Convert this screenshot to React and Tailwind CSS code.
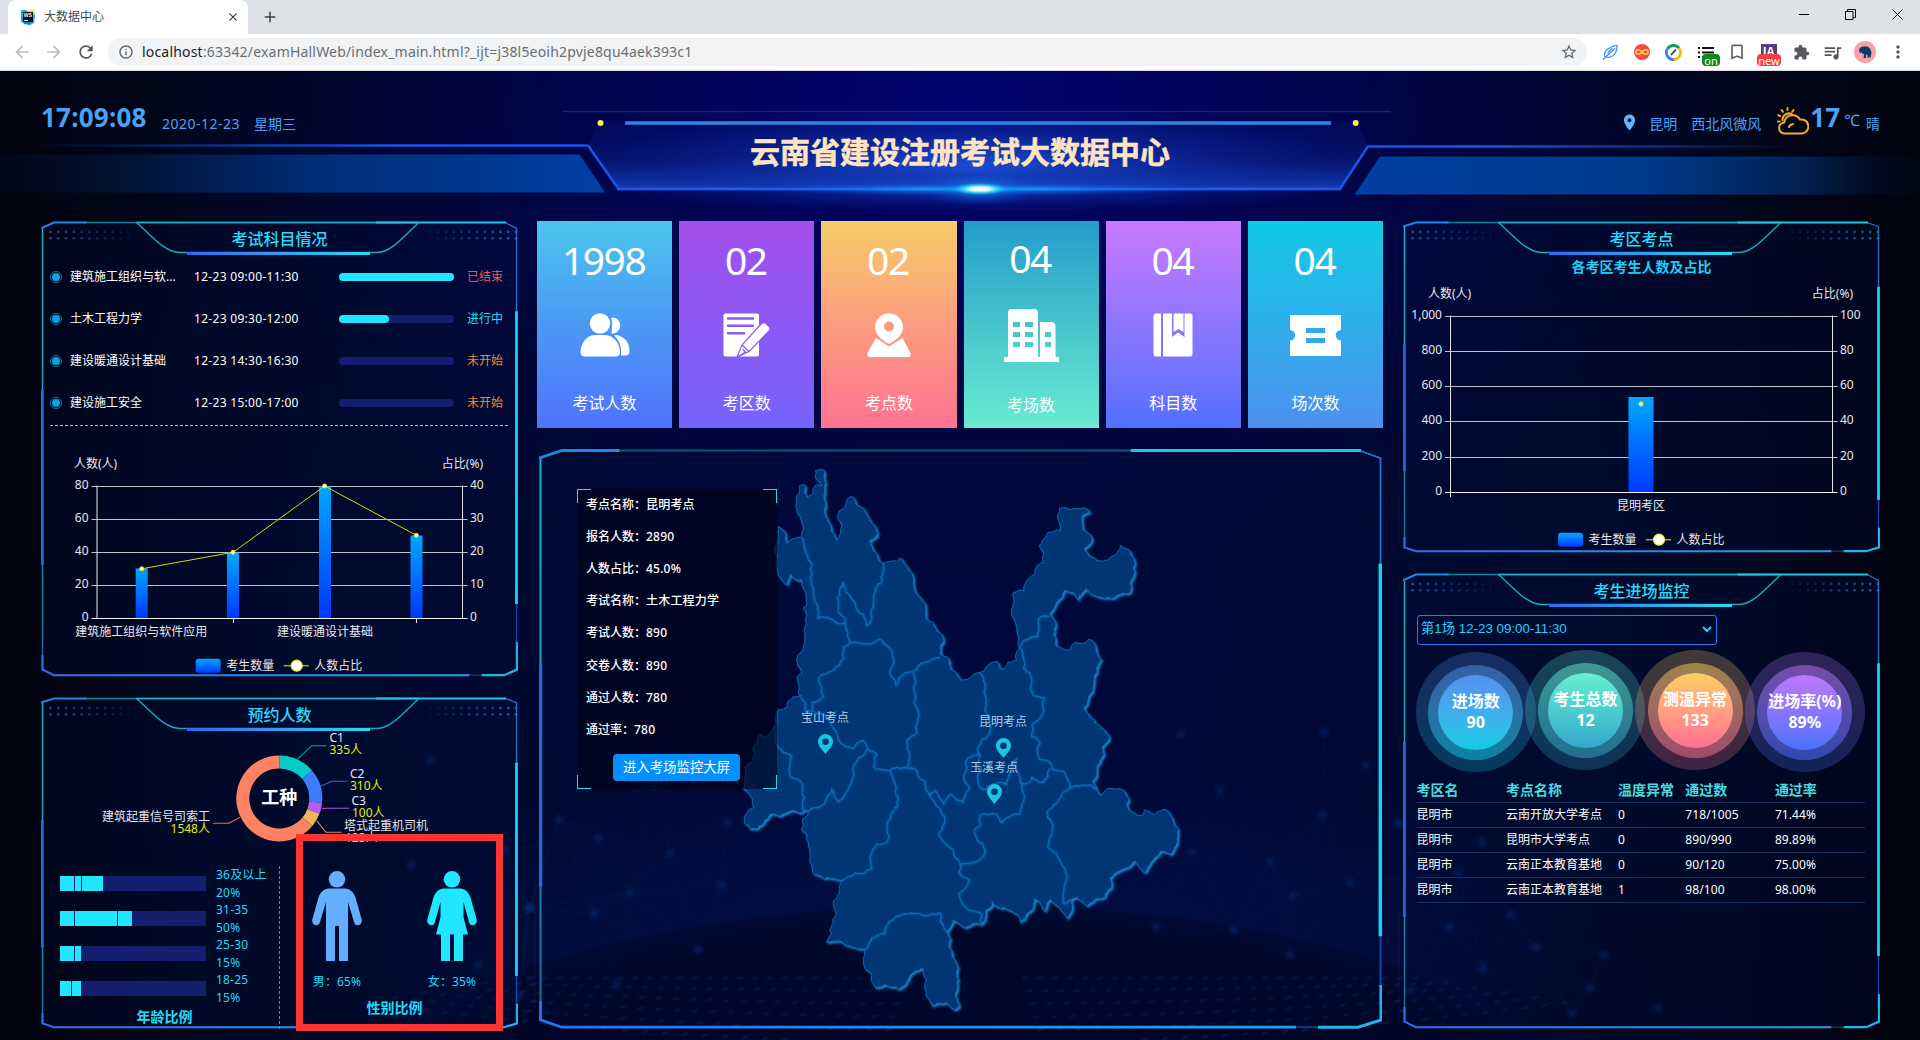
import React from "react";
import {
  MdArrowBack, MdArrowForward, MdRefresh, MdInfoOutline, MdStarBorder, MdExtension,
  MdQueueMusic, MdMoreVert, MdBookmarkBorder, MdLocationOn, MdClose, MdAdd,
} from "react-icons/md";

/* ---------- geometry helpers ---------- */

const hash = (a, b, c) => {
  const s = Math.sin(a * 12.9898 + b * 78.233 + c * 37.719) * 43758.5453;
  return s - Math.floor(s) - 0.5;
};

// Splits a segment by midpoint displacement; the result does not depend on its direction.
const rough = (p, q, out) => {
  const dx = q[0] - p[0];
  const dy = q[1] - p[1];
  const len = Math.hypot(dx, dy);
  if (len < 3.2) {
    out.push(q);
    return;
  }
  const sign = p[0] + p[1] * 0.37 < q[0] + q[1] * 0.37 ? 1 : -1;
  const k = hash(p[0] + q[0], p[1] + q[1], 1) * 0.42 * sign;
  const m = [(p[0] + q[0]) / 2 - dy * k * 0.8, (p[1] + q[1]) / 2 + dx * k * 0.8];
  rough(p, m, out);
  rough(m, q, out);
};

const toPage = ([x, y]) => [530 + x / 3, 440 + y / 2.613];

const coast = (pts, closed) => {
  const page = pts.map(toPage);
  const out = [page[0]];
  for (let i = 1; i < page.length; i++) rough(page[i - 1], page[i], out);
  if (closed) rough(page[page.length - 1], page[0], out);
  return "M" + out.map((p) => p[0].toFixed(1) + " " + p[1].toFixed(1)).join("L") + (closed ? "Z" : "");
};

const east = (pts) => pts.map(([x, y]) => [x + 1110, y]);

const OUTLINE = [
  [857,80],[880,78],[884,120],[884,160],[890,205],[905,240],[921,262],[922,200],[940,178],[950,160],[965,147],[985,172],[1008,192],[1025,218],[1043,245],[1018,262],[1030,290],[1058,322],[1075,318],[1100,318],[1110,308],[1130,330],[1150,370],[1170,410],[1187,432],[1187,462],[1205,475],[1235,508],[1238,530],[1230,560],[1255,570],[1262,600],[1282,612],[1293,627],[1320,622],
  ...east([[238,608],[262,590],[290,578],[303,600],[325,580],[350,575],[358,540],[350,500],[335,460],[340,398],[372,395],[395,355],[430,320],[432,295],[418,275],[440,245],[480,238],[473,195],[478,178],[510,182],[565,182],[568,190],[543,200],[548,235],[572,250],[572,270],[552,285],[570,305],[590,317],[635,305],[660,275],[690,290],[702,310],[700,360],[690,398],[668,400],[640,413],[590,408],[558,388],[535,418],[495,392],[470,425],[450,455],[468,480],[470,540],[490,548],[510,548],[522,530],[555,530],[567,520],[585,535],[605,575],[582,620],[570,665],[552,700],[560,712],[595,745],[628,775],[608,800],[612,820],[592,850],[578,890],[590,915],[605,928],[620,912],[660,912],[685,935],[685,965],[725,982],[735,966],[760,980],[800,968],[815,985],[835,1018],[828,1060],[810,1083],[780,1075],[750,1110],[735,1130],[705,1100],[680,1118],[630,1145],[635,1170],[615,1195],[585,1200],[562,1217],[530,1195],[515,1200],[503,1250],[470,1215],[450,1200],[435,1232],[405,1198],[385,1235],[362,1262],[335,1230],[275,1205],[245,1265],[190,1272],[158,1255],[140,1285],[150,1330],[170,1370],[175,1410],[165,1450],[178,1478],[165,1488],[140,1470],[95,1480],[78,1450],[80,1410],[68,1380],[30,1400]]),
  [1105,1435],[1060,1425],[1035,1430],[1025,1400],[1005,1380],[1008,1330],[985,1330],[950,1320],[888,1312],[905,1270],[920,1240],[910,1210],[930,1175],[940,1150],[920,1148],[880,1145],[848,1130],[840,1075],[835,1050],[815,1020],[818,990],[838,968],[780,970],[720,978],[660,1018],[642,1000],[672,960],[665,935],[640,912],[645,855],[668,840],[668,805],[688,768],[705,778],[735,750],[740,708],[770,700],[790,670],[812,668],[800,620],[815,610],[825,520],[820,440],[815,365],[780,352],[770,378],[755,365],[740,320],[732,285],[745,250],[745,225],[765,240],[770,270],[790,258],[815,255],[820,235],[802,190],[808,120],[825,118],[832,150],[850,140],[855,120],[875,120],[855,95],
];

const BORDERS = [
  [[815,255],[830,300],[845,350],[850,400],[862,465],[905,468],[920,478],[945,480]],
  [[1058,322],[1055,370],[1030,410],[1020,480],[1008,485],[1000,455],[970,420],[940,370],[922,410],[925,450],[945,480],[960,530]],
  [[960,530],[990,530],[1045,520],[1080,545],[1080,600],[1098,640],[1125,608],[1150,605],[1185,580],[1230,570]],
  [[1150,605],[1155,660],[1165,710],[1160,765],[1130,790],[1130,855]],
  [[960,530],[940,540],[942,570],[910,600],[865,620],[880,670],[845,685],[845,708]],
  [[812,668],[825,708],[845,708],[880,715],[905,745],[930,790],[970,805],[1000,785],[1015,810],[1040,820],[1035,860],[1080,862],[1120,855],[1155,860]],
  [[1010,808],[985,830],[960,900],[925,945],[905,910],[890,935],[838,968]],
  [[740,708],[745,800],[785,825],[780,880],[818,900],[820,968]],
  [[1080,862],[1095,900],[1090,970],[1070,1010],[1072,1050],[1040,1055],[1025,1120],[975,1130],[940,1150]],
  [[1155,860],[1200,930],[1240,1005],[1225,1030],[1270,1070],[1290,1110],[1285,1130],[1320,1150],[1310,1165],[1285,1185],[1295,1210],[1320,1230],[1355,1240],[1355,1265]],
  [[1200,930],[1215,915],[1240,950],[1260,925],[1300,948],[1318,910],[1300,880],[1310,835],[1350,822],[1342,803],[1375,770],[1378,730],[1368,690],[1360,620],[1348,608]],
  east([[358,540],[370,595],[390,610],[397,665],[432,672],[430,710],[395,745],[395,775],[420,790],[420,835],[448,840],[455,858],[490,865],[512,908],[590,912]]),
  east([[358,540],[390,515],[410,515],[415,468],[450,460]]),
  east([[448,858],[430,895],[395,880],[385,895],[360,895],[352,830],[335,850],[320,900],[280,898],[250,915],[235,895],[245,860],[240,822]]),
  east([[365,895],[372,940],[360,978],[305,1000],[290,978],[240,980],[240,1008],[225,1015],[230,1045],[255,1075],[240,1095],[215,1105],[180,1110]]),
  east([[512,908],[490,920],[440,970],[455,1000],[445,1065],[470,1080],[490,1115],[492,1170],[488,1210],[515,1200]]),
  [[1008,1330],[1025,1300],[1065,1290],[1075,1260],[1130,1238],[1180,1243],[1230,1235],[1245,1280],[1250,1285]],
];

/* ---------- browser chrome ---------- */

function TabStrip() {
  return (
    <div className="flex h-[34px] w-full items-start justify-between bg-[#dee1e6]">
      <div className="flex items-center">
        <div className="ml-2 flex h-[34px] w-60 items-center rounded-t-lg bg-white pl-3 pr-2">
          <svg width="16" height="16" viewBox="0 0 16 16">
            <path d="M1 1l5 0 3 2 5-2 1 6-1 7-4 2-5-2-4-1z" fill="#12b5e8" />
            <path d="M8 1l6 0 1 4-4 1z" fill="#e8e84a" />
            <path d="M1 8l3 7 6 1 1-3z" fill="#1380e0" />
            <rect x="3" y="3" width="10" height="10" fill="#111" />
            <text x="3.8" y="8" fontSize="5" fontWeight="700" fill="#fff" fontFamily="Liberation Sans, sans-serif">WS</text>
            <rect x="4" y="11" width="4" height="1" fill="#fff" />
          </svg>
          <span className="ml-2 flex-1 text-xs text-[#45494d]">大数据中心</span>
          <MdClose className="size-[14px] text-[#3c4043]" />
        </div>
        <MdAdd className="ml-[13px] size-[18px] text-[#3c4043]" />
      </div>
      <div className="flex h-[28px] items-center gap-9 pr-[17px]">
        <span className="h-px w-2.5 bg-black" />
        <svg width="11" height="11" viewBox="0 0 11 11" fill="none" stroke="#000"><path d="M.5 2.5h7.5v8H.5zM2.5 2.5v-2h8v8H8" /></svg>
        <svg width="11" height="11" viewBox="0 0 11 11" fill="none" stroke="#000"><path d="M.5.5l10 10M10.500.5l-10 10" /></svg>
      </div>
    </div>
  );
}

function Toolbar() {
  return (
    <div className="flex h-[37px] w-full items-center border-b border-[#d5dadf] bg-white">
      <div className="ml-3 flex w-24 items-center gap-3">
        <MdArrowBack className="size-5 text-[#babcbe]" />
        <MdArrowForward className="size-5 text-[#babcbe]" />
        <MdRefresh className="size-5 text-[#54575b]" />
      </div>
      <div className="flex h-7 w-[1479px] items-center rounded-full bg-[#f1f3f4] pl-2.5 pr-[9px]">
        <MdInfoOutline className="size-4 text-[#5f6368]" />
        <span className="ml-2 flex-1 text-sm tracking-[0.19px] text-[#6a6e72]">
          <span className="text-[#202124]">localhost</span>:63342/examHallWeb/index_main.html?_ijt=j38l5eoih2pvje8qu4aek393c1
        </span>
        <MdStarBorder className="size-[18px] text-[#5f6368]" />
      </div>
      <div className="flex items-center">
        <div className="flex w-8 justify-end">
          <svg width="17" height="18" viewBox="0 0 18 18" fill="none" stroke="#3f8fe8" strokeWidth="1.3"><path d="M1 17L14 5M3 14C1 8 8 3 16 2c0 8-5 14-11 12.500M6 10l5-5" /></svg>
        </div>
        <div className="ml-[15px] flex size-4 items-center justify-center rounded-full bg-[#f5484a]">
          <svg width="14" height="8" viewBox="0 0 14 8" fill="none" stroke="#ffd83a" strokeWidth="1.500"><path d="M7 4C5 1 1 1 1 4s4 3 6 0 6-3 6 0-4 3-6 0z" /></svg>
        </div>
        <svg className="ml-[15px]" width="17" height="17" viewBox="0 0 17 17" fill="none" strokeWidth="2.8">
          <path d="M2.700 4.500A7 7 0 0 1 14 4.200" stroke="#159a5b" />
          <path d="M14 4.200A7 7 0 0 1 9 15.500" stroke="#f7b90f" />
          <path d="M9 15.500A7 7 0 0 1 2.700 4.500" stroke="#3b7ded" />
          <path d="M6 11l5-5.500" stroke="#333" strokeWidth="1.800" />
        </svg>
        <div className="relative ml-4 h-4 w-4">
          <svg width="16" height="16" viewBox="0 0 16 16" stroke="#111" strokeWidth="2"><path d="M0 4h2M4 4h12M0 8.500h2M4 8.500h12M0 13h2M4 13h12" /></svg>
          <span className="absolute left-1 top-[10px] flex h-3 w-[18px] items-center justify-center rounded-sm bg-[#11871f] text-[11px] leading-none text-white">on</span>
        </div>
        <MdBookmarkBorder className="ml-[13px] size-5 text-[#5f6368]" />
        <div className="relative ml-[14px] h-4 w-4 bg-[#533c80] text-center font-['Liberation_Sans',sans-serif] text-[12px] font-bold leading-4 text-white">
          IA
          <span className="absolute -left-1 top-[10px] flex h-3 w-6 items-center justify-center rounded-sm bg-[#f93e3e] font-['Noto_Sans',sans-serif] text-[11px] font-normal leading-none text-white">new</span>
        </div>
        <MdExtension className="ml-4 size-[17px] text-[#54575b]" />
        <MdQueueMusic className="ml-3 size-[21px] text-[#54575b]" />
        <div className="ml-[11px] flex size-[22px] items-center justify-center rounded-full bg-[#f9a1a6]">
          <svg width="14" height="14" viewBox="0 0 14 14"><path d="M1 6q0-4 4-4.500 5-1 7 2l1.500 4-1 5H9.500V10L8 9.500V13H5.500L6 9 4 8.500 3.500 7 2 8z" fill="#123a66" /></svg>
        </div>
        <MdMoreVert className="ml-3 size-5 text-[#54575b]" />
      </div>
    </div>
  );
}

/* ---------- page background ---------- */

const NODES = [
  [559,819],[598,838],[654,785],[670,853],[630,893],[722,885],[727,822],[594,914],[698,950],[617,985],[530,908],
  [1181,734],[1220,791],[1192,852],[1270,861],[1293,895],[1324,732],[1323,815],[1366,765],[1350,883],[1156,927],[1234,930],[1398,823],[1290,955],
  [1450,927],[1483,968],[1536,947],[1511,915],[1604,955],[1590,988],[1482,842],[1459,873],[1572,1014],[1659,1008],[1411,990],
  [411,865],[505,850],[478,965],[519,996],[430,760],[528,908],
];

function Backdrop() {
  const links = [];
  NODES.forEach((a, i) =>
    NODES.forEach((b, j) => {
      if (j > i && Math.hypot(a[0] - b[0], a[1] - b[1]) < 118) links.push([a, b]);
    })
  );
  const dashes = [];
  for (let r = 0; r < 6; r++) {
    for (let i = -30; i <= 30; i++) {
      const x = 965 + i * (15 + r);
      const y = 978 + r * 13 - i * i * 0.018 * r * 0.5;
      if (Math.abs(i) > 3 && y < 1040) dashes.push([x, y, i]);
    }
  }
  return (
    <svg className="absolute inset-0" width="1920" height="969" viewBox="0 71 1920 969">
      <defs>
        <radialGradient id="bgTop" gradientUnits="userSpaceOnUse" cx="960" cy="100" r="820" gradientTransform="translate(960 100) scale(1 .6) translate(-960 -100)">
          <stop offset="0" stopColor="#000270" /><stop offset=".4" stopColor="#00035a" stopOpacity=".85" /><stop offset="1" stopColor="#000540" stopOpacity="0" />
        </radialGradient>
        <radialGradient id="bgMid" gradientUnits="userSpaceOnUse" cx="960" cy="640" r="980">
          <stop offset="0" stopColor="#00063e" /><stop offset=".6" stopColor="#000a2c" /><stop offset="1" stopColor="#010619" />
        </radialGradient>
        <radialGradient id="bgHorizon" gradientUnits="userSpaceOnUse" cx="965" cy="940" r="640" gradientTransform="translate(965 940) scale(1 .28) translate(-965 -940)">
          <stop offset="0" stopColor="#031458" stopOpacity=".5" /><stop offset=".6" stopColor="#021250" stopOpacity=".45" /><stop offset="1" stopColor="#020c50" stopOpacity="0" />
        </radialGradient>
        <linearGradient id="bgSides" x1="0" y1="0" x2="1" y2="0">
          <stop offset="0" stopColor="#01030f" /><stop offset=".1" stopColor="#01030f" stopOpacity="0" /><stop offset=".9" stopColor="#01030f" stopOpacity="0" /><stop offset="1" stopColor="#01030f" />
        </linearGradient>
        <radialGradient id="bgHill" gradientUnits="userSpaceOnUse" cx="965" cy="1125" r="626" gradientTransform="translate(965 1125) scale(1 .35) translate(-965 -1125)">
          <stop offset="0" stopColor="#000526" /><stop offset=".9" stopColor="#000628" /><stop offset="1" stopColor="#000932" />
        </radialGradient>
      </defs>
      <rect x="0" y="71" width="1920" height="969" fill="url(#bgMid)" />
      <rect x="0" y="71" width="1920" height="969" fill="url(#bgTop)" />
      <rect x="300" y="740" width="1330" height="300" fill="url(#bgHorizon)" />
      <ellipse cx="965" cy="1125" rx="626" ry="220" fill="url(#bgHill)" />
      <g stroke="#0c2f80" strokeWidth="1" opacity=".18">
        {links.map(([a, b], i) => <line key={i} x1={a[0]} y1={a[1]} x2={b[0]} y2={b[1]} />)}
      </g>
      <g fill="#0a3480">
        {NODES.map(([x, y], i) => (
          <g key={i}><circle cx={x} cy={y} r="6" opacity=".2" /><circle cx={x} cy={y} r="3" opacity=".3" /></g>
        ))}
      </g>
      <g fill="#0b3a8c" opacity=".28">
        {dashes.map(([x, y, i], k) => <ellipse key={k} cx={x} cy={y} rx="4" ry="1.500" transform={`rotate(${i < 0 ? -14 : -16} ${x} ${y})`} />)}
      </g>
      <rect x="0" y="71" width="1920" height="969" fill="url(#bgSides)" />
    </svg>
  );
}

/* ---------- header ---------- */

function HeaderArt() {
  return (
    <svg className="absolute inset-0" width="1920" height="150" viewBox="0 71 1920 150">
      <defs>
        <linearGradient id="bandL"><stop offset="0" stopColor="#01122e" stopOpacity=".3" /><stop offset=".5" stopColor="#002c74" /><stop offset="1" stopColor="#0040a4" /></linearGradient>
        <linearGradient id="bandR"><stop offset="0" stopColor="#003fa0" /><stop offset=".5" stopColor="#003a8e" /><stop offset=".8" stopColor="#01204e" /><stop offset="1" stopColor="#010818" stopOpacity=".3" /></linearGradient>
        <linearGradient id="edgeL" gradientUnits="userSpaceOnUse" x1="30" y1="0" x2="400" y2="0"><stop offset="0" stopColor="#1656f0" stopOpacity="0" /><stop offset="1" stopColor="#1656f0" /></linearGradient>
        <linearGradient id="edgeR" gradientUnits="userSpaceOnUse" x1="1480" y1="0" x2="1800" y2="0"><stop offset="0" stopColor="#1656f0" /><stop offset="1" stopColor="#1656f0" stopOpacity="0" /></linearGradient>
        <linearGradient id="bannerV" x1="0" y1="0" x2="0" y2="1"><stop offset="0" stopColor="#081c8c" stopOpacity=".2" /><stop offset=".55" stopColor="#0c269a" stopOpacity=".4" /><stop offset="1" stopColor="#1644c0" stopOpacity=".9" /></linearGradient>
        <radialGradient id="bannerC"><stop offset="0" stopColor="#1c50d8" stopOpacity=".95" /><stop offset="1" stopColor="#0a2494" stopOpacity="0" /></radialGradient>
        <radialGradient id="flareWide"><stop offset="0" stopColor="#22c8ff" /><stop offset=".25" stopColor="#1088f0" stopOpacity=".75" /><stop offset="1" stopColor="#0a40d0" stopOpacity="0" /></radialGradient>
        <radialGradient id="flareCore"><stop offset="0" stopColor="#fff" /><stop offset=".35" stopColor="#e8f4ff" /><stop offset=".6" stopColor="#38e0f8" stopOpacity=".9" /><stop offset="1" stopColor="#18b0f0" stopOpacity="0" /></radialGradient>
        <linearGradient id="lineB"><stop offset="0" stopColor="#1656f0" /><stop offset=".35" stopColor="#1a70f8" /><stop offset=".5" stopColor="#40e8ff" /><stop offset=".65" stopColor="#1a70f8" /><stop offset="1" stopColor="#1656f0" /></linearGradient>
        <clipPath id="bannerClip"><path d="M566 111H1390L1368 146 1340 189H618L588 146z" /></clipPath>
      </defs>
      <path d="M0 154.500H579.600L605 192.500H0z" fill="url(#bandL)" />
      <path d="M1380 156.500H1920V194.500H1354.700z" fill="url(#bandR)" />
      <g clipPath="url(#bannerClip)">
        <path d="M600 121H1356L1368 146 1340 189H618L588 146z" fill="url(#bannerV)" />
        <ellipse cx="975" cy="165" rx="380" ry="62" fill="url(#bannerC)" />
      </g>
      <ellipse cx="978" cy="190" rx="380" ry="22" fill="url(#bannerC)" opacity=".7" />
      <path d="M563 111.500H1391" stroke="#0a2a7c" strokeWidth="1.500" />
      <path d="M625 123H1331" stroke="#2f86e2" strokeWidth="3.500" />
      <ellipse cx="600.5" cy="123" rx="3" ry="3" fill="#ffee4a" /><ellipse cx="1355.700" cy="123" rx="3" ry="3" fill="#ffee4a" />
      <path d="M30 145.500H588" stroke="url(#edgeL)" strokeWidth="2.500" fill="none" />
      <path d="M588 145.500L618.500 189" stroke="#1656f0" strokeWidth="2.500" />
      <path d="M1340 189L1367.800 146.500H1800" stroke="url(#edgeR)" strokeWidth="2.500" fill="none" />
      <rect x="617" y="187.700" width="724" height="2.600" fill="url(#lineB)" />
      <ellipse cx="980" cy="189" rx="240" ry="7" fill="url(#flareWide)" />
      <ellipse cx="980" cy="189" rx="60" ry="17" fill="url(#flareWide)" opacity=".8" />
      <ellipse cx="980" cy="189" rx="28" ry="6" fill="url(#flareCore)" />
    </svg>
  );
}

function Header() {
  return (
    <header className="relative flex h-[150px] w-full justify-between pl-[41px] pr-10 text-[#4aa2f8]">
      <HeaderArt />
      <div className="relative flex h-[93px] items-center">
        <span className="w-[121px] font-['Open_Sans'] text-[26px] font-bold tracking-[0.2px]">17:09:08</span>
        <span className="mt-[13px] w-[92px] text-sm tracking-[0.5px]">2020-12-23</span>
        <span className="mt-[13px] text-sm">星期三</span>
      </div>
      <h1 className="absolute left-[750px] top-[59px] w-[420px] whitespace-nowrap text-[30px] font-bold leading-[44px] text-[#ffe4c4] [-webkit-text-stroke:0.5px_#ffe4c4]">云南省建设注册考试大数据中心</h1>
      <div className="relative flex h-[93px] items-center">
        <MdLocationOn className="mt-2.5 size-[19px] text-[#6ab2ff]" />
        <span className="ml-[10px] mt-[13px] text-sm">昆明</span>
        <span className="ml-[14px] mt-[13px] text-sm">西北风微风</span>
        <svg className="ml-4 mt-[6px]" width="32" height="28" viewBox="0 0 32 28" fill="none" stroke="#f0ab30" strokeWidth="2" strokeLinecap="round" strokeLinejoin="round">
          <path d="M8 26.500a5.500 5.500 0 0 1-.8-11A8.500 8.500 0 0 1 23 12.500a7 7 0 0 1 2.500 14z" />
          <path d="M5.500 13.500a6.500 6.500 0 0 1 10-6M10.500 1v2M4.500 3l1.300 1.700M1.200 8.200l2 .7M1 14.500h1.600M16.500 3l-1.200 1.700M12 20a5 5 0 0 1 4-3" />
        </svg>
        <span className="ml-px font-['Open_Sans'] text-[26px] font-bold">17</span>
        <span className="ml-1 mt-1 w-[22px] text-base">℃</span>
        <span className="mt-[13px] text-sm">晴</span>
      </div>
    </header>
  );
}

/* ---------- panel frame ---------- */

function Frame({ w, h, id, tab = true }) {
  const l = 1.500, t = 1.500, r = w - 1.500, b = h - 1.800;
  const k = w > 600 ? 1.4 : 1;
  const cx = w * 0.027, cy = h * 0.014;
  const dots = [];
  if (tab)
    for (let i = 0; i < 12; i++)
      for (let j = 0; j < 2; j++) {
        dots.push([9.500 + i * 7.800, 11 + j * 6.300, 0.6 - i * 0.050]);
        dots.push([w - 2 - i * 7.800, 11 + j * 6.300, 0.75 - i * 0.060]);
      }
  return (
    <svg className="pointer-events-none absolute inset-0" width={w} height={h} fill="none">
      <defs>
        <linearGradient id={id + "l"} gradientUnits="userSpaceOnUse" x1="0" y1="0" x2="0" y2={h}><stop offset="0" stopColor="#1ab4d0" /><stop offset=".4" stopColor="#18a8c8" /><stop offset="1" stopColor="#126c98" /></linearGradient>
        <linearGradient id={id + "b"} gradientUnits="userSpaceOnUse" x1="0" y1="0" x2={w} y2="0"><stop offset="0" stopColor="#2872f0" /><stop offset="1" stopColor="#22a6e8" /></linearGradient>
        <linearGradient id={id + "t"} gradientUnits="userSpaceOnUse" x1="146" y1="0" x2="329" y2="0"><stop offset="0" stopColor="#2f68f0" /><stop offset="1" stopColor="#22dcf8" /></linearGradient>
      </defs>
      <path d={`M${cx} ${t}H${w - cx}L${r} ${cy}V${h - cy}L${w - cx} ${b}H${cx}L${l} ${h - cy}V${cy}z`} fill="#00103a" fillOpacity=".28" />
      <g fill="#1c7fd0">{dots.map(([x, y, o], i) => <circle key={i} cx={x} cy={y} r="1.400" opacity={o} />)}</g>
      <path d={`M${w * 0.09} ${t}H${w * 0.75}`} stroke={tab ? "#14809c" : "#0c5c80"} strokeWidth={1.3 * k} />
      {tab && <path d="M95 1.500H378" stroke="#1cb4cc" strokeWidth="1.500" />}
      <path d={`M${l} ${cy + 1}V${h - cy}`} stroke={`url(#${id}l)`} strokeWidth={1.4 * k} />
      <path d={`M${w - cx} ${t}L${r} ${cy + 1}V${h * 0.21}`} stroke="#2274c8" strokeWidth={1.3 * k} />
      <path d={`M${r} ${h * 0.8}V${h * 0.95}`} stroke="#1a4aa8" strokeWidth={1.3 * k} />
      <path d={`M${w * 0.89} ${b}H${w * 0.93}`} stroke="#123a90" strokeWidth={1.2 * k} />
      <path d={`M0 ${cy + 1}L${cx} ${t}H${w * 0.0955}`} stroke="#2486e0" strokeWidth={2 * k} />
      <path d={`M${w * 0.702} ${t}H${w * 0.975}`} stroke="#1cc8e4" strokeWidth={2 * k} />
      <path d={`M${l - 0.2} ${h * 0.37}V${h * 0.754}`} stroke="#2468dc" strokeWidth={2.800 * k} />
      <path d={`M${l} ${h * 0.952}V${h - cy - 1}L${cx} ${b}H${w * 0.898}`} stroke={`url(#${id}b)`} strokeWidth={2 * k} />
      <path d={`M${w * 0.924} ${b}H${w - cx - 1}L${r + 0.5} ${h - cy - 1}V${h * 0.924}`} stroke="#20b4e8" strokeWidth={2.200 * k} />
      <path d={`M${r} ${h * 0.198}V${h * 0.84}`} stroke="#1ed0ee" strokeWidth={2.800 * k} />
      {tab && <path d="M95.500 1.500C112 16 124 31.500 139 31.500H336C350 31.500 362 16 378 1.500" stroke="#1ba6be" strokeWidth="1.500" />}
      {tab && <path d="M146 32.500H329" stroke={`url(#${id}t)`} strokeWidth="2.800" />}
    </svg>
  );
}

function Panel({ id, title, h, className, children }) {
  return (
    <section className={"relative flex w-[477px] flex-col " + className}>
      <Frame w={477} h={h} id={id} />
      <h2 className="relative flex h-[35px] shrink-0 items-center justify-center pt-px text-base font-medium leading-none text-[#2adcfc]">{title}</h2>
      {children}
    </section>
  );
}

/* ---------- charts ---------- */

function Legend({ x, y }) {
  return (
    <g>
      <rect x={x} y={y - 7} width="25" height="14" rx="3" fill="url(#barFill)" />
      <text x={x + 30.500} y={y + 4}>考生数量</text>
      <path d={`M${x + 88} ${y}h25`} stroke="#a8a81a" strokeWidth="1.500" />
      <circle cx={x + 101} cy={y} r="5.500" fill="#fff" stroke="#f2f21a" strokeWidth="1.200" />
      <text x={x + 118.500} y={y + 4}>人数占比</text>
    </g>
  );
}

function AxisChart({ box, left, right, ys, lLabels, rLabels, bars, barW, line, cats, names, legend, ticks }) {
  const bottom = ys[ys.length - 1];
  return (
    <svg className="relative block shrink-0" width={box[2]} height={box[3]} viewBox={box.join(" ")} fill="#e6e8ee" fontSize="12">
      <defs>
        <linearGradient id="barFill" x1="0" y1="0" x2="0" y2="1"><stop offset="0" stopColor="#00a8ff" /><stop offset="1" stopColor="#0038ff" /></linearGradient>
      </defs>
      <text x={names[0]} y={names[2]}>人数(人)</text>
      <text x={names[1]} y={names[2]} textAnchor="end">占比(%)</text>
      {ys.map((y, i) => (
        <g key={i}>
          <path d={`M${left - 5.500} ${y}H${right + 5}`} stroke={i === ys.length - 1 ? "#f2f2f5" : "#c2c4cc"} strokeWidth="1" />
          <text x={left - 8.500} y={y + 2.800} textAnchor="end">{lLabels[i]}</text>
          <text x={right + 7.500} y={y + 2.800}>{rLabels[i]}</text>
        </g>
      ))}
      <path d={`M${left} ${ys[0] - 1}V${bottom}M${right} ${ys[0] - 1}V${bottom}`} stroke="#e4e6ec" strokeWidth="1" />
      {ticks.map((x) => <path key={x} d={`M${x} ${bottom}v4.500`} stroke="#e4e6ec" />)}
      {bars.map(([x, y]) => <rect key={x} x={x - barW / 2} y={y} width={barW} height={bottom - y - 0.5} fill="url(#barFill)" />)}
      <polyline points={line.map((p) => p.join(",")).join(" ")} fill="none" stroke="#d6d60c" strokeWidth="1" />
      {line.map(([x, y]) => <circle key={x} cx={x} cy={y} r="2" fill="#fff" stroke="#f0f018" strokeWidth="1" />)}
      {cats.map(([x, s]) => <text key={s} x={x} y={bottom + 17} textAnchor="middle">{s}</text>)}
      <Legend x={legend[0]} y={legend[1]} />
    </svg>
  );
}

const EXAMS = [
  ["建筑施工组织与软...", "12-23 09:00-11:30", "w-full", "已结束", "text-[#f05660]"],
  ["土木工程力学", "12-23 09:30-12:00", "w-[50px]", "进行中", "text-[#20e0f8]"],
  ["建设暖通设计基础", "12-23 14:30-16:30", "w-0", "未开始", "text-[#f58a30]"],
  ["建设施工安全", "12-23 15:00-17:00", "w-0", "未开始", "text-[#f58a30]"],
];

function SubjectPanel() {
  return (
    <Panel id="fa" title="考试科目情况" h={456} className="h-[456px]">
      <div className="relative ml-[9px] h-[170px] w-[458px] border-b border-dashed border-[#5ce0e6] text-xs text-white">
        {EXAMS.map(([name, time, width, state, color]) => (
          <div key={name} className="flex h-[42px] items-center">
            <span className="flex size-3 items-center justify-center rounded-full border border-[#0f74b0]"><span className="size-2 rounded-full bg-[#0fa0e0]" /></span>
            <span className="ml-2 w-[124px] whitespace-nowrap">{name}</span>
            <span className="w-[145px] tracking-[0.3px]">{time}</span>
            <span className="h-2 w-[115px] rounded-full bg-[#141e6e]"><span className={"block h-2 rounded-full bg-[#20e6ff] " + width} /></span>
            <span className={"ml-[13px] " + color}>{state}</span>
          </div>
        ))}
      </div>
      <AxisChart
        box={[41, 426, 477, 251]} left={97} right={462.500} ys={[486.500, 519.500, 552.500, 585.500, 618.500]}
        lLabels={["80", "60", "40", "20", "0"]} rLabels={["40", "30", "20", "10", "0"]}
        bars={[[141.700, 568.500], [233, 552.500], [325, 486.500], [416.500, 535.500]]} barW={12}
        line={[[141.700, 568.800], [233, 552.300], [324.700, 486], [416.300, 535.300]]}
        cats={[[141.200, "建筑施工组织与软件应用"], [325, "建设暖通设计基础"]]}
        names={[74, 483, 468]} legend={[195.700, 665.700]} ticks={[233.500, 416.500]}
      />
    </Panel>
  );
}

const JOBS = [[335, "#05cbc9"], [310, "#3f7bff"], [100, "#b95cf4"], [123, "#f0b65c"], [1548, "#ff8363"]];

function JobDonut() {
  const total = JOBS.reduce((s, j) => s + j[0], 0);
  const c = [279.300, 798.400];
  let a = 0;
  const arcs = JOBS.map(([v, color]) => {
    const a0 = a;
    a += (v / total) * Math.PI * 2;
    const p = (ang, r) => `${c[0] + r * Math.sin(ang)} ${c[1] - r * Math.cos(ang)}`;
    const big = a - a0 > Math.PI ? 1 : 0;
    return [color, `M${p(a0, 43)}A43 43 0 ${big} 1 ${p(a, 43)}L${p(a, 30)}A30 30 0 ${big} 0 ${p(a0, 30)}z`];
  });
  return (
    <svg className="relative -mt-3 block shrink-0" width="477" height="136" viewBox="41 720 477 136" fontSize="12" fill="#e6e8ee">
      {arcs.map(([color, d]) => <path key={color} d={d} fill={color} />)}
      <g fill="none" strokeWidth="1.100">
        <path d="M297.300 759.300L311.700 745.700H326.700" stroke="#05a8a8" />
        <path d="M320.700 786L332.300 781.300H347.300" stroke="#3568d8" />
        <path d="M321.700 808.700L327 808.300H349" stroke="#a450dc" />
        <path d="M316.700 820.700L326 832.300H341.700" stroke="#c89850" />
        <path d="M240 817.300L228.700 823.300H213.300" stroke="#e07050" />
      </g>
      <text x="279.300" y="804" textAnchor="middle" fontSize="18" fontWeight="700" fill="#fff">工种</text>
      <text x="329.500" y="742.300">C1</text>
      <text x="350" y="778.300">C2</text>
      <text x="351.500" y="805">C3</text>
      <text x="344" y="829.500">塔式起重机司机</text>
      <text x="210" y="821" textAnchor="end">建筑起重信号司索工</text>
      <g fill="#eaea08">
        <text x="329.500" y="754.300">335人</text>
        <text x="350" y="790.300">310人</text>
        <text x="352" y="817.300">100人</text>
        <text x="345" y="841.800">123人</text>
        <text x="210" y="832.500" textAnchor="end">1548人</text>
      </g>
    </svg>
  );
}

const AGES = [
  ["36及以上", "20%", ["w-[14px]", "w-[6px]", "w-[21px]"]],
  ["31-35", "50%", ["w-[14px]", "w-[42px]", "w-[14px]"]],
  ["25-30", "15%", ["w-[14px]", "w-[6px]"]],
  ["18-25", "15%", ["w-[11px]", "w-[9px]"]],
];

function BookingPanel() {
  return (
    <Panel id="fb" title="预约人数" h={332} className="mt-5 h-[332px]">
      <JobDonut />
      <div className="relative flex flex-1 pl-[19px] pt-[10px]">
        <div className="flex w-[220px] flex-col border-r border-dashed border-[#5a86c8]">
          {AGES.map(([label, pct, segs]) => (
            <div key={label} className="flex h-[35px] items-center">
              <div className="flex h-[15px] w-[146px] gap-px bg-[#141e6e]">
                {segs.map((s, i) => <span key={i} className={"h-full bg-[#20e6ff] " + s} />)}
              </div>
              <div className="ml-2.5 text-xs leading-[17.600px] tracking-[0.2px] text-[#20dcf4]">{label}<br />{pct}</div>
            </div>
          ))}
          <div className="-ml-[10px] mt-px text-center text-sm font-bold leading-5 text-[#22dcf8]">年龄比例</div>
        </div>
        <div className="flex flex-1 flex-col items-center pl-[26px] pr-[35px] text-[#20dcf4]">
          <div className="flex w-full justify-between pt-[5px]">
            <div className="flex w-[62px] flex-col items-center">
              <svg width="50" height="90" viewBox="0 0 50 90" fill="#62aeff">
                <circle cx="25" cy="8.300" r="8.300" />
                <path d="M17 17.500h16c5 0 9 4 10.500 9L49.800 49c.8 5-5.500 7.500-7.500 3L36 31v59H27V55.500q-2-1.500-4 0V90H14V31L7.700 52c-2 4.500-8.300 2-7.500-3L6.500 26.500c1.500-5 5.500-9 10.500-9z" />
              </svg>
              <span className="mt-[11px] whitespace-nowrap text-xs leading-5 tracking-[0.15px]">男：65%</span>
            </div>
            <div className="flex w-[62px] flex-col items-center">
              <svg width="50" height="90" viewBox="0 0 50 90" fill="#20e6ff">
                <circle cx="25" cy="8.300" r="8.300" />
                <path d="M17 17.500h16c5 0 9 4 10.500 9L49.800 49c.8 5-5.500 7.500-7.500 3L36.500 31v15L41 63.500H36V90H27V63.500h-4V90H14V63.500H9L13.500 46V31L7.700 52c-2 4.500-8.300 2-7.500-3L6.500 26.500c1.500-5 5.500-9 10.500-9z" />
              </svg>
              <span className="mt-[11px] whitespace-nowrap text-xs leading-5 tracking-[0.15px]">女：35%</span>
            </div>
          </div>
          <div className="mt-[6px] text-sm font-bold leading-5 text-[#22dcf8]">性别比例</div>
        </div>
      </div>
      <div className="absolute left-[255px] top-[137px] h-[197px] w-[207px] border-[7px] border-[#fb3534]" />
    </Panel>
  );
}

/* ---------- centre column ---------- */

const CARDS = [
  ["1998", "考试人数", "from-[#4ac6ec] via-[#4c98f4] to-[#5072ff]",
    <svg key="i" width="50" height="44" viewBox="0 0 50 44" fill="#fff"><path d="M33 4.500a8 8 0 1 1-1.500 16C32 14 33 9 31 5.200zM36 22c8 1 13.500 7 13.500 16 0 3-1.500 4.500-4 4.500H41c.8-9-1.500-15-7-20z" /><circle cx="20" cy="10.500" r="10.200" /><path d="M15 22h10c8 0 15 8 15 17 0 3-1.500 4.500-4 4.500H5c-3 0-4.500-1.500-4.500-4.500C.5 30 7 22 15 22z" /></svg>],
  ["02", "考区数", "from-[#a34fec] via-[#8b58f4] to-[#7664fc]",
    <svg key="i" width="47" height="44" viewBox="0 0 47 44"><rect x=".5" y=".5" width="35.500" height="43" rx="2" fill="#fff" /><path d="M5 5.500h25M5 12.800h25M5 20.300h16" stroke="#8b58f4" strokeWidth="2.500" strokeLinecap="round" /><path d="M14 44l5-12L38.500 10.500q2.500-2 4.500 0l3 3q2 2 0 4.500L26 38.500z" fill="#fff" stroke="#8b58f4" strokeWidth="1.200" /><path d="M19 32l7 6.500M19.500 36l3 3-8 5" fill="none" stroke="#8b58f4" strokeWidth="1.200" /></svg>],
  ["02", "考点数", "from-[#f6cc68] via-[#fb9c7e] to-[#ff7290]",
    <svg key="i" width="44" height="44" viewBox="0 0 44 44" fill="#fff"><path fillRule="evenodd" d="M22 .5c8 0 14 6 14 13.500 0 7-6 13-14 17C14 27 8 21 8 14 8 6.500 14 .5 22 .5zM22 8.500a5 5 0 1 0 0 10 5 5 0 0 0 0-10z" /><path d="M9 25l13 8.500L35.500 25 43.500 40q1 4-3 4h-37q-4 0-3-4z" strokeLinejoin="round" /></svg>],
  ["04", "考场数", "from-[#249ccc] via-[#46c4cc] to-[#68ecd2]",
    <svg key="i" width="55" height="53" viewBox="0 0 55 53" fill="#fff"><path fillRule="evenodd" d="M4 48V4q0-4 4-4h22q4 0 4 4v44h2V13h11q4.500 0 4.500 4.500V48H55v5H0v-5zM9 13v5h7v-5zM21 13v5h8v-5zM9 23v5h7v-5zM21 23v5h8v-5zM9 33v5h7v-5zM21 33v5h8v-5zM41 23v5h6v-5zM41 33v5h6v-5z" /></svg>],
  ["04", "科目数", "from-[#c878fc] via-[#8c76fe] to-[#5070ff]",
    <svg key="i" width="40" height="44" viewBox="0 0 40 44" fill="#fff"><path d="M3 .5h5v43H3Q.5 43.500.5 41V3Q.5.5 3 .5zM10 .5h9V24l6-4.500 6.500 4.500V.500H37q2.500 0 2.500 2.500v38q0 2.500-2.500 2.500H10z" /><path d="M20.500.5h10V19L25.500 16l-5 3z" /></svg>],
  ["04", "场次数", "from-[#0ecae6] via-[#2caeea] to-[#4c90f0]",
    <svg key="i" width="51" height="41" viewBox="0 0 51 41" fill="#fff"><path fillRule="evenodd" d="M0 0h51v15a5.200 5.200 0 0 0 0 10.500V41H0V25.500A5.200 5.200 0 0 0 0 15zM16 13v5h19v-5zM16 23v5h19v-5z" /></svg>],
];

function Cards() {
  return (
    <div className="grid h-[207px] grid-cols-6 grid-rows-1 gap-[7px]">
      {CARDS.map(([num, label, grad, icon], i) => (
        <div key={label} className={"flex h-[207px] flex-col items-center bg-gradient-to-b text-white " + grad}>
          <div className={"flex shrink-0 items-center pr-0.5 text-[39px] leading-none tracking-[-1.5px] " + (i === 3 ? "h-[72px]" : "h-[76px]")}>{num}</div>
          <div className={"flex h-[76px] shrink-0 items-center justify-center " + (i === 3 ? "mt-1" : "")}>{icon}</div>
          <div className={"flex h-[55px] shrink-0 items-center text-base leading-none " + (i === 3 ? "pt-2" : "pt-[5px]")}>{label}</div>
        </div>
      ))}
    </div>
  );
}

const SITE = [
  ["考点名称：", "昆明考点"], ["报名人数：", "2890"], ["人数占比：", "45.0%"], ["考试名称：", "土木工程力学"],
  ["考试人数：", "890"], ["交卷人数：", "890"], ["通过人数：", "780"], ["通过率：", "780"],
];

const PINS = [
  ["宝山考点", "left-[256px] top-[258.500px]"],
  ["昆明考点", "left-[434px] top-[263px]"],
  ["玉溪考点", "left-[425px] top-[309px]"],
];

function MapPanel() {
  return (
    <section className="relative ml-0.5 mt-[21px] h-[580px] w-[843px]">
      <Frame w={843} h={580} id="fc" tab={false} />
      <svg className="absolute inset-0" width="843" height="580" viewBox="539 449 843 580" fill="none">
        <defs>
          <filter id="mapGlow" x="-5%" y="-5%" width="112%" height="112%">
            <feDropShadow dx="1.500" dy="1.500" stdDeviation="1" floodColor="#1a90d8" floodOpacity=".95" />
          </filter>
          <filter id="lineGlow" x="-5%" y="-5%" width="112%" height="112%">
            <feDropShadow dx=".6" dy=".6" stdDeviation=".9" floodColor="#1484d0" floodOpacity=".8" />
          </filter>
        </defs>
        <path d={coast(OUTLINE, true)} fill="#033676" stroke="#0f66b0" strokeWidth="1" filter="url(#mapGlow)" />
        <g stroke="#0f6ab8" strokeWidth="1.100" filter="url(#lineGlow)">
          {BORDERS.map((b, i) => <path key={i} d={coast(b, false)} />)}
        </g>
      </svg>
      {PINS.map(([name, pos]) => (
        <div key={name} className={"absolute flex w-[60px] flex-col items-center text-xs leading-5 text-[#b4cae8] " + pos}>
          {name}
          <svg className="mt-[6px]" width="15" height="20" viewBox="0 0 15 20"><path fillRule="evenodd" fill="#1cc4e4" d="M7.500 0A7.500 7.500 0 0 1 15 7.500C15 12 10.500 16 7.500 20 4.500 16 0 12 0 7.500A7.500 7.500 0 0 1 7.500 0zm0 4.500a3.300 3.300 0 1 0 0 6.600 3.300 3.300 0 0 0 0-6.600z" /></svg>
        </div>
      ))}
      <div className="absolute left-[38px] top-10 flex h-[300px] w-[200px] flex-col bg-[#000418]/60 pl-[9px] text-xs font-medium text-white">
        <span className="absolute left-0 top-0 size-3.5 border-l border-t border-[#1ee0e8]" />
        <span className="absolute right-0 top-0 size-3.5 border-r border-t border-[#1ee0e8]" />
        <span className="absolute bottom-0 left-0 size-3.5 border-b border-l border-[#1ee0e8]" />
        <span className="absolute bottom-0 right-0 size-3.5 border-b border-r border-[#1ee0e8]" />
        {SITE.map(([k, v]) => <div key={k} className="flex h-[32.100px] items-center"><span>{k}</span><span className="tracking-[0.2px]">{v}</span></div>)}
        <button className="ml-[27px] mt-2 h-[27px] w-[127px] rounded bg-[#0091ff] text-[13.400px] font-normal leading-none text-white">进入考场监控大屏</button>
      </div>
    </section>
  );
}

/* ---------- right column ---------- */

function AreaPanel() {
  return (
    <Panel id="fd" title="考区考点" h={332} className="h-[332px]">
      <div className="relative h-6 text-center text-sm font-bold leading-[22px] text-[#22cdf4]">各考区考生人数及占比</div>
      <AxisChart
        box={[1403, 280, 477, 272]} left={1450.500} right={1832.500} ys={[316.500, 351.500, 386.500, 421.500, 457.500, 492.500]}
        lLabels={["1,000", "800", "600", "400", "200", "0"]} rLabels={["100", "80", "60", "40", "20", "0"]}
        bars={[[1641, 397]]} barW={25} line={[[1641, 404]]} cats={[[1641, "昆明考区"]]}
        names={[1428, 1853, 298]} legend={[1558, 539.700]} ticks={[1450.500]}
      />
    </Panel>
  );
}

const RINGS = [
  ["进场数", "90", "from-[#5490ee] to-[#06cce6]"],
  ["考生总数", "12", "from-[#68f0d0] to-[#34a8cc]"],
  ["测温异常", "133", "from-[#fcce62] to-[#fe6e92]"],
  ["进场率(%)", "89%", "from-[#bc78fc] to-[#4870ff]"],
];

const ROWS = [
  ["昆明市", "云南开放大学考点", "0", "718/1005", "71.44%"],
  ["昆明市", "昆明市大学考点", "0", "890/990", "89.89%"],
  ["昆明市", "云南正本教育基地", "0", "90/120", "75.00%"],
  ["昆明市", "云南正本教育基地", "1", "98/100", "98.00%"],
];

function MonitorPanel() {
  return (
    <Panel id="fe" title="考生进场监控" h={456} className="mt-5 h-[456px]">
      <div className="relative ml-[14px] mt-[7px] flex h-[30px] w-[300px] items-center justify-between rounded-[3px] border border-[#2a7af0] pb-0.5 pl-[3px] pr-1 font-['Liberation_Sans','Noto_Sans_CJK_SC',sans-serif] text-[13.333px] text-[#20d2f6]">
        <span className="whitespace-nowrap">第1场 12-23 09:00-11:30</span>
        <svg width="10" height="7" viewBox="0 0 10 7" fill="none" stroke="#20d2f6" strokeWidth="2"><path d="M1 1l4 4 4-4" /></svg>
      </div>
      <div className="relative ml-[13px] mt-[6px] flex">
        {RINGS.map(([label, value, grad], i) => (
          <div key={label} className={"relative -ml-[.3px] mr-[-10px] size-[120px] shrink-0 " + (i === 1 || i === 2 ? "-mt-px" : "mt-px")}>
            <div className={"absolute inset-0 rounded-full bg-gradient-to-b opacity-25 " + grad} />
            <div className={"absolute inset-[12.500px] rounded-full bg-gradient-to-b opacity-50 " + grad} />
            <div className={"absolute inset-[22.500px] rounded-full bg-gradient-to-b " + grad} />
            <div className="absolute inset-0 flex flex-col items-center justify-center whitespace-nowrap text-base font-bold leading-[21px] text-white">
              <span>{label}</span><span>{value}</span>
            </div>
          </div>
        ))}
      </div>
      <div className="relative ml-[13.500px] mt-[6px] w-[448px] text-xs text-white">
        <div className="grid h-[25px] grid-cols-[89.600px_112px_67.200px_89.600px_89.600px] items-center whitespace-nowrap border-b border-[#15305c] text-sm font-bold leading-none text-[#48dce0]">
          <span>考区名</span><span>考点名称</span><span>温度异常</span><span>通过数</span><span>通过率</span>
        </div>
        {ROWS.map((row, i) => (
          <div key={i} className="grid h-[25px] grid-cols-[89.600px_112px_67.200px_89.600px_89.600px] items-center whitespace-nowrap border-b border-[#15305c]">
            {row.map((c, j) => <span key={j} className={j > 1 ? "tracking-[0.1px]" : ""}>{c}</span>)}
          </div>
        ))}
      </div>
    </Panel>
  );
}

export default function App() {
  return (
    <div className="flex h-[1040px] w-[1920px] flex-col overflow-hidden bg-[#010520] font-['Noto_Sans','Noto_Sans_CJK_SC',sans-serif]">
      <TabStrip />
      <Toolbar />
      <main className="relative h-[969px] w-full overflow-hidden">
        <Backdrop />
        <Header />
        <div className="relative flex pl-[41px]">
          <div className="flex w-[477px] flex-col"><SubjectPanel /><BookingPanel /></div>
          <div className="ml-[19px] flex w-[846px] flex-col"><Cards /><MapPanel /></div>
          <div className="ml-5 flex w-[477px] flex-col"><AreaPanel /><MonitorPanel /></div>
        </div>
      </main>
    </div>
  );
}
